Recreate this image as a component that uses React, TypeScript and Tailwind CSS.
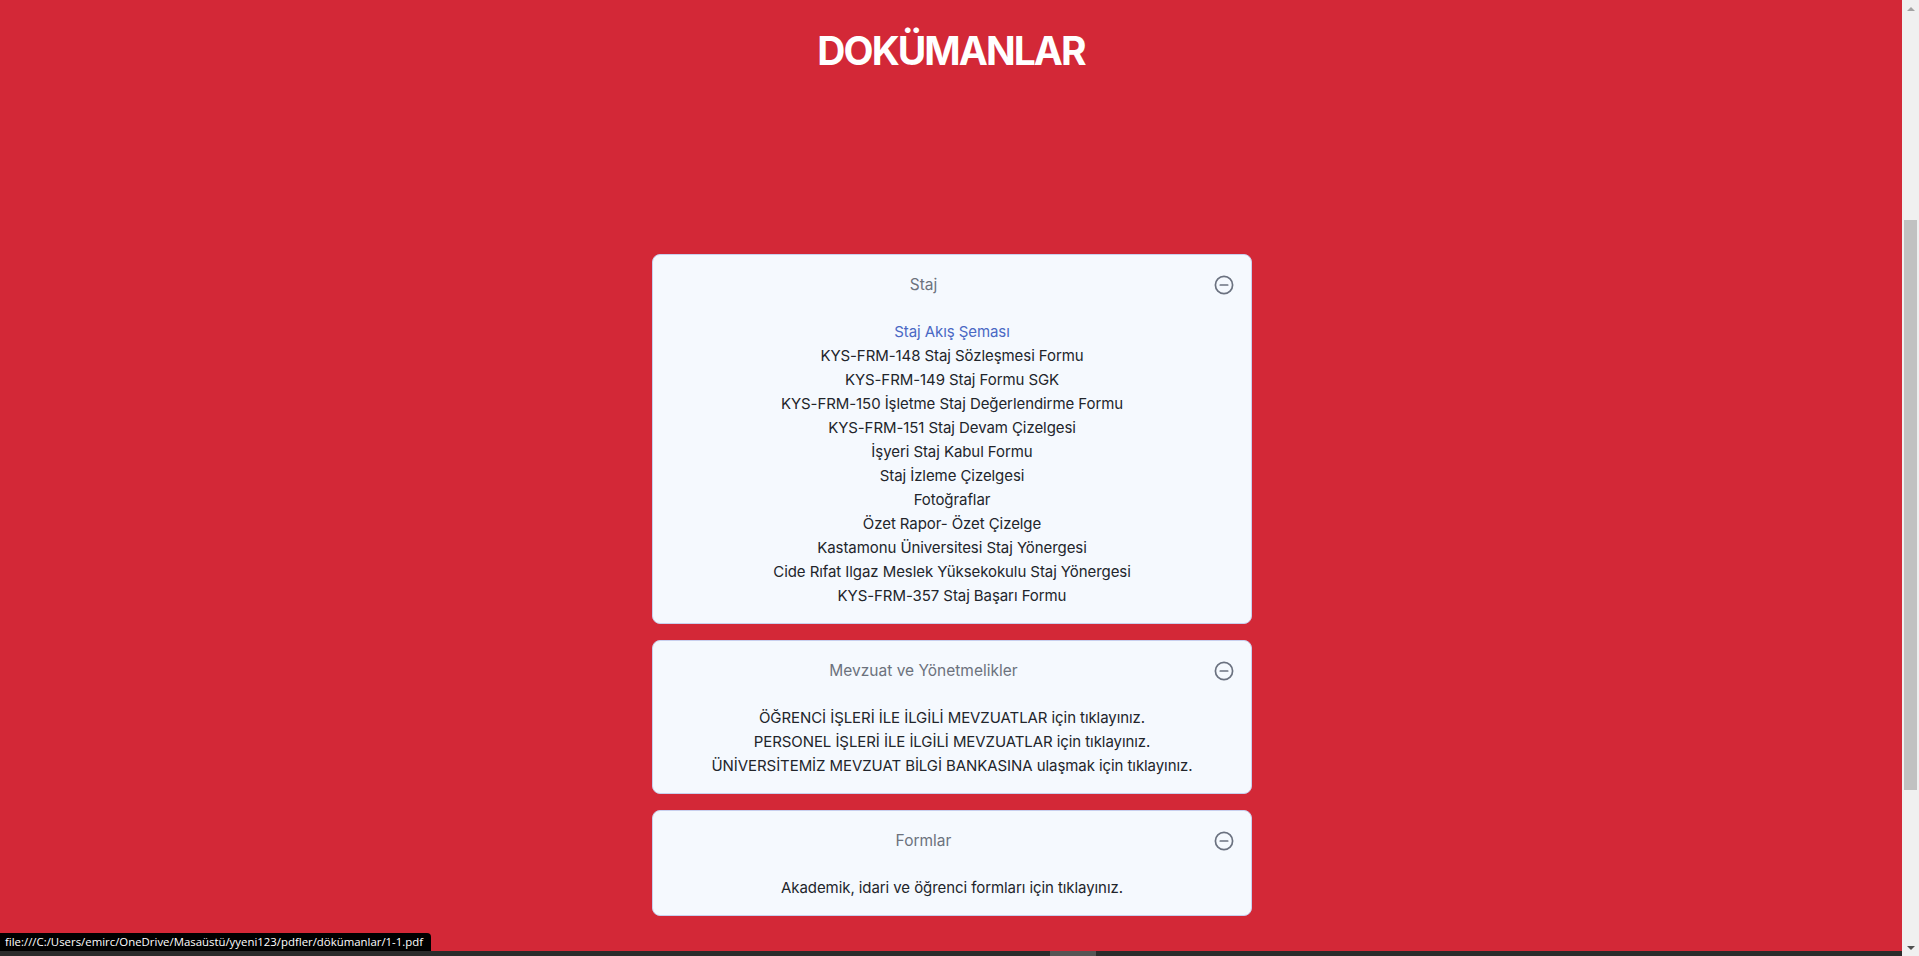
const staj = [
  "Staj Akış Şeması",
  "KYS-FRM-148 Staj Sözleşmesi Formu",
  "KYS-FRM-149 Staj Formu SGK",
  "KYS-FRM-150 İşletme Staj Değerlendirme Formu",
  "KYS-FRM-151 Staj Devam Çizelgesi",
  "İşyeri Staj Kabul Formu",
  "Staj İzleme Çizelgesi",
  "Fotoğraflar",
  "Özet Rapor- Özet Çizelge",
  "Kastamonu Üniversitesi Staj Yönergesi",
  "Cide Rıfat Ilgaz Meslek Yüksekokulu Staj Yönergesi",
  "KYS-FRM-357 Staj Başarı Formu",
];

const mevzuat = [
  "ÖĞRENCİ İŞLERİ İLE İLGİLİ MEVZUATLAR için tıklayınız.",
  "PERSONEL İŞLERİ İLE İLGİLİ MEVZUATLAR için tıklayınız.",
  "ÜNİVERSİTEMİZ MEVZUAT BİLGİ BANKASINA ulaşmak için tıklayınız.",
];

const formlar = ["Akademik, idari ve öğrenci formları için tıklayınız."];

function MinusIcon() {
  return (
    <svg width="20" height="20" viewBox="0 0 20 20" fill="none" stroke="#6b7280" strokeWidth="1.7">
      <circle cx="10" cy="10" r="8.6" />
      <line x1="6.3" y1="10" x2="13.7" y2="10" strokeLinecap="round" />
    </svg>
  );
}

function Panel({ title, items, firstActive }: { title: string; items: string[]; firstActive?: boolean }) {
  return (
    <div className="bg-[#f5f9fe] border border-[#c9d0ee] rounded-lg">
      <div className="flex items-center pl-5 pr-[17px] pt-[18px] pb-[14px]">
        <span className="flex-1 text-center text-[15.5px] leading-6 text-[#6c727d]">{title}</span>
        <span className="ml-10 flex"><MinusIcon /></span>
      </div>
      <ul className="pt-[9px] pb-[15px] flex flex-col items-center">
        {items.map((item, i) => (
          <li
            key={item}
            className={`text-[15px] leading-6 tracking-[-0.005em] cursor-pointer ${firstActive && i === 0 ? "text-[#4a68c4]" : "text-[#22252b]"}`}
          >
            {item}
          </li>
        ))}
      </ul>
    </div>
  );
}

export default function App() {
  return (
    <div className="h-screen flex overflow-hidden" style={{ fontFamily: "Inter, 'Noto Sans', sans-serif" }}>
      <div className="flex-1 flex flex-col bg-[#d32837] relative">
        <main className="flex-1 flex flex-col items-center">
          <h1 className="mt-[27px] text-[39px] leading-[48px] font-bold tracking-[-0.05em] text-white">DOKÜMANLAR</h1>
          <section className="mt-[179px] ml-[2px] w-[600px] flex flex-col gap-4">
            <Panel title="Staj" items={staj} firstActive />
            <Panel title="Mevzuat ve Yönetmelikler" items={mevzuat} />
            <Panel title="Formlar" items={formlar} />
          </section>
        </main>

        {/* status tooltip */}
        <div
          className="absolute left-0 bottom-[5px] h-[18px] pl-[5px] pr-2 bg-black text-white text-[11.4px] leading-[18px] rounded-tr-sm"
          style={{ fontFamily: "'Open Sans', 'Liberation Sans', sans-serif" }}
        >
          file:///C:/Users/emirc/OneDrive/Masaüstü/yyeni123/pdfler/dökümanlar/1-1.pdf
        </div>

        <div className="h-[5px] bg-[#2b2b2b] flex">
          <div className="ml-[1050px] w-[46px] bg-[#555555]" />
        </div>
      </div>

      {/* scrollbar */}
      <div className="w-[17px] bg-[#f0f0f0] flex flex-col items-center">
        <div className="h-[17px] flex items-center justify-center">
          <svg width="8" height="4" viewBox="0 0 8 4"><polygon points="0,4 4,0 8,4" fill="#a3a3a3" /></svg>
        </div>
        <div className="flex-1 w-full px-[2px] pt-[203px] pb-[149px] flex">
          <div className="flex-1 bg-[#c1c1c1]" />
        </div>
        <div className="h-[17px] flex items-center justify-center">
          <svg width="8" height="4" viewBox="0 0 8 4"><polygon points="0,0 8,0 4,4" fill="#505050" /></svg>
        </div>
      </div>
    </div>
  );
}
